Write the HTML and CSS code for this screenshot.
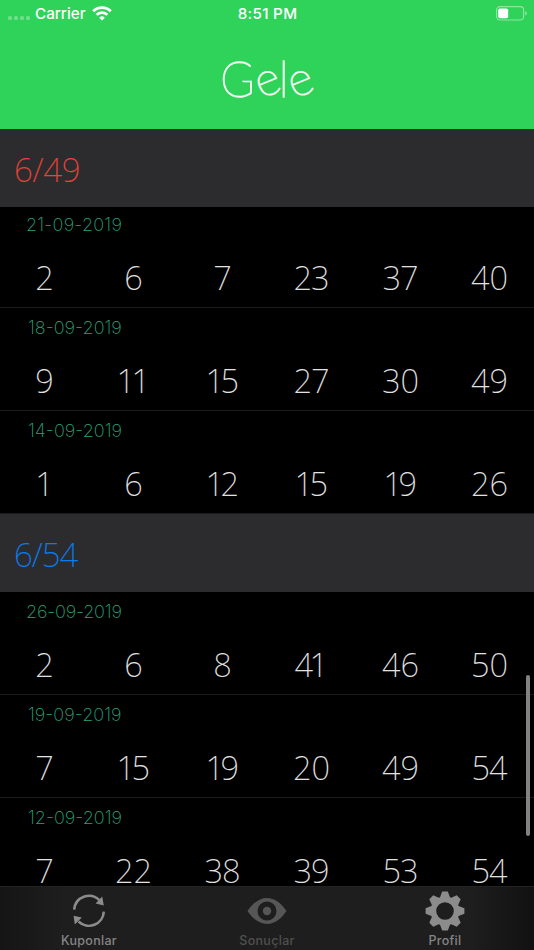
FILE: index.html
```html
<!DOCTYPE html>
<html lang="tr">
<head>
<meta charset="utf-8">
<title>Gele</title>
<link rel="stylesheet" href="styles.css">
</head>
<body>
<div class="app">
  <header class="top">
    <div class="status">
      <div class="carrier">
        <span class="dots"><i></i><i></i><i></i><i></i></span>
        <span>Carrier</span>
        <svg class="wifi" viewBox="0 0 20 15" fill="none" stroke="#fff" stroke-width="2.9"><path d="M1.2 5.2a12.6 12.6 0 0 1 17.6 0M4.6 8.8a7.8 7.8 0 0 1 10.8 0"/><path d="M10 14.5 7.2 11.7a4 4 0 0 1 5.6 0z" fill="#fff" stroke="none"/></svg>
      </div>
      <div class="time">8:51 PM</div>
      <svg class="battery" viewBox="0 0 31 15"><rect x=".6" y=".6" width="27" height="13.4" rx="3.4" fill="none" stroke="#fff" stroke-opacity=".45" stroke-width="1.1"/><rect x="2.2" y="2.4" width="10" height="9.8" rx="1.8" fill="#fff"/><path d="M29.3 5v4.6a2.5 2.5 0 0 0 0-4.6z" fill="#fff" fill-opacity=".5"/></svg>
    </div>
    <h1 class="title"><span class="g">G</span><span class="e">e</span><span class="l">l</span><span class="e">e</span></h1>
  </header>
  <main class="list">
    <h2 class="group red pinned">6/49</h2>
    <section class="draw"><time class="loose">21-09-2019</time><div class="nums"><b>2</b><b>6</b><b>7</b><b>23</b><b>37</b><b class="wide">40</b></div></section>
    <section class="draw"><time class="one">18-09-2019</time><div class="nums"><b>9</b><b class="kern">11</b><b class="kern">15</b><b>27</b><b class="wide">30</b><b class="wide">49</b></div></section>
    <section class="draw"><time class="one">14-09-2019</time><div class="nums"><b>1</b><b>6</b><b class="kern">12</b><b class="kern">15</b><b class="kern">19</b><b class="wide">26</b></div></section>
    <h2 class="group blue">6/54</h2>
    <section class="draw"><time>26-09-2019</time><div class="nums"><b>2</b><b>6</b><b>8</b><b class="kern">41</b><b class="wide">46</b><b class="wide">50</b></div></section>
    <section class="draw"><time class="one">19-09-2019</time><div class="nums"><b>7</b><b class="kern">15</b><b class="kern">19</b><b class="wide">20</b><b class="wide">49</b><b>54</b></div></section>
    <section class="draw"><time class="one">12-09-2019</time><div class="nums"><b>7</b><b class="wide">22</b><b>38</b><b>39</b><b>53</b><b>54</b></div></section>
    <div class="thumb"></div>
  </main>
  <nav class="tabs">
    <div class="tab">
      <svg viewBox="0 0 40 40"><g fill="none" stroke="#8c8c8c" stroke-width="2.6"><path d="M5.200 18.600A14.800 14.800 0 0 1 30.400 9.200"/><path d="M34.800 20.600A14.800 14.800 0 0 1 9.600 30.500"/></g><path d="M34.800 14.400 26.600 12.400 33.200 5.400zM4.600 24.800l8.200 1.800-7 7z" fill="#8c8c8c"/></svg>
      <span>Kuponlar</span>
    </div>
    <div class="tab active">
      <svg viewBox="0 0 40 40"><path fill="#565656" fill-rule="evenodd" d="M.5 20C6 12 12.500 7 20 7s14 5 19.500 13C34 28 27.500 33 20 33S6 28 .5 20zM20 10.500a9.500 9.500 0 1 0 0 19 9.500 9.500 0 0 0 0-19z"/><circle cx="20" cy="20" r="4.200" fill="#565656"/></svg>
      <span>Sonuçlar</span>
    </div>
    <div class="tab">
      <svg viewBox="0 0 40 40"><g fill="#8c8c8c"><path id="tooth" d="M14 9 17.200.6h5.600L26 9z"/><use href="#tooth" transform="rotate(45 20 20)"/><use href="#tooth" transform="rotate(90 20 20)"/><use href="#tooth" transform="rotate(135 20 20)"/><use href="#tooth" transform="rotate(180 20 20)"/><use href="#tooth" transform="rotate(225 20 20)"/><use href="#tooth" transform="rotate(270 20 20)"/><use href="#tooth" transform="rotate(315 20 20)"/></g><circle cx="20" cy="20" r="11.600" fill="#1e1e1e" stroke="#8c8c8c" stroke-width="5.600"/></svg>
      <span>Profil</span>
    </div>
  </nav>
</div>
</body>
</html>
```
FILE: styles.css
```css
* { box-sizing: border-box; }
body { margin: 0; background: #000; }
.app { width: 534px; height: 950px; display: flex; flex-direction: column; overflow: hidden; }

.top { flex: none; height: 129px; background: #30d35a; color: #fff; }
.status { height: 26px; padding: 0 7px 0 8px; display: grid; grid-template-columns: 1fr auto 1fr; align-items: center; font: 460 15.2px Inter, sans-serif; }
.carrier { display: flex; align-items: center; }
.dots { display: flex; gap: 2px; margin: 9px 5px 0 0; }
.dots i { width: 4px; height: 4px; border-radius: 1.5px; background: rgba(255, 255, 255, .3); }
.wifi { width: 20px; height: 15px; margin-left: 6px; }
.time { letter-spacing: .3px; }
.battery { width: 31px; height: 15px; justify-self: end; }
.title { margin: 22px 0 0; padding-right: 6px; height: 60px; display: flex; justify-content: center; font: 100 50px/60px Lato, sans-serif; color: #f1f8f2; -webkit-text-stroke: 1.4px #f1f8f2; }
.title span { display: block; text-align: center; }
.g { width: 34px; transform: scaleX(.93); }
.e { width: 24px; transform: rotate(-22deg) scale(.94); }
.l { width: 10px; padding-left: 2px; }
.l + .e { margin-left: -1px; }

.list { position: relative; flex: 1; min-height: 0; overflow: hidden; }
.group { margin: 0; height: 78px; padding-left: 14px; background: #2c2c2e; font: 200 33px/81px "Noto Sans", sans-serif; letter-spacing: -.3px; }
.pinned { position: relative; z-index: 1; margin-bottom: -2.500px; }
.red { color: #ea4238; }
.blue { color: #0a7cf0; letter-spacing: -1px; }
.draw { height: 103.100px; border-bottom: 1px solid #1b1b1d; overflow: hidden; }
.draw time { display: block; height: 38px; padding-left: 26px; color: #29a47b; font: 200 18px/39px Inter, sans-serif; letter-spacing: -.2px; }
.draw .loose { letter-spacing: .2px; }
.draw .one { padding-left: 28px; letter-spacing: 0; }
.nums { display: grid; grid-template-columns: repeat(6, 89px); text-align: center; }
.nums b { padding-right: 1px; font: 200 32.500px/70px "Noto Sans", sans-serif; letter-spacing: -1px; color: #e2e2e2; }
.nums .kern { padding-right: 4px; letter-spacing: -3.500px; }
.nums .wide { padding-right: 0; letter-spacing: 0; }
.thumb { position: absolute; right: 4px; top: 546px; width: 4px; height: 161px; border-radius: 2px; background: #828282; }

.tabs { flex: none; height: 64px; display: grid; grid-template-columns: repeat(3, 1fr); background: linear-gradient(90deg, #151515, #1e1e1e 12%, #1e1e1e 88%, #111); border-top: 1px solid #232323; }
.tab { display: flex; flex-direction: column; align-items: center; padding-top: 4px; color: #858585; font: 500 12.500px/19px Inter, sans-serif; letter-spacing: .3px; }
.tab svg { width: 40px; height: 40px; }
.active { color: #505050; }
```
